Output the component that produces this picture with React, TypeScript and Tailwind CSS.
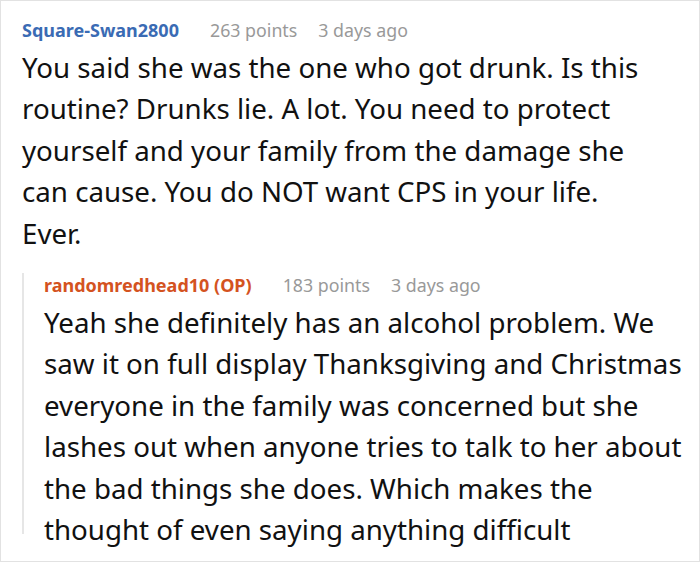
const comments = [
  {
    author: "Square-Swan2800",
    authorColor: "text-[#3a6bb4]",
    points: "263 points",
    time: "3 days ago",
    lines: [
      "You said she was the one who got drunk. Is this",
      "routine? Drunks lie. A lot. You need to protect",
      "yourself and your family from the damage she",
      "can cause. You do NOT want CPS in your life.",
      "Ever.",
    ],
  },
  {
    author: "randomredhead10 (OP)",
    authorColor: "text-[#d4531f]",
    points: "183 points",
    time: "3 days ago",
    lines: [
      "Yeah she definitely has an alcohol problem. We",
      "saw it on full display Thanksgiving and Christmas",
      "everyone in the family was concerned but she",
      "lashes out when anyone tries to talk to her about",
      "the bad things she does. Which makes the",
      "thought of even saying anything difficult",
    ],
  },
]

function Header({ c }: { c: (typeof comments)[number] }) {
  return (
    <div className="flex items-center gap-[31px] text-[18px] leading-[24px] whitespace-nowrap">
      <span className={`font-bold ${c.authorColor}`}>{c.author}</span>
      <div className="flex gap-[21px] text-[#999999] text-[17.8px]">
        <span>{c.points}</span>
        <span>{c.time}</span>
      </div>
    </div>
  )
}

export default function App() {
  const [first, reply] = comments

  return (
    <div className="w-[700px] h-[562px] overflow-hidden bg-white border border-[#e2e2e2] [font-family:'Noto_Sans',sans-serif] text-[#111111]">

      {/* TOP COMMENT */}

      <div className="pl-[21px] pt-[17px]">
        <Header c={first} />
        <div className="mt-[4.5px] text-[27.7px] leading-[41.5px] whitespace-nowrap">
          {first.lines.map((line, i) => (
            <div key={i}>{line}</div>
          ))}
        </div>
      </div>

      {/* REPLY */}

      <div className="ml-[21px] mt-[28px] border-l-2 border-[#e6e6e6] pl-[20px] h-[261px]">
        <div className="-mt-[9px]">
          <Header c={reply} />
        </div>
        <div className="mt-[4.5px] text-[27.7px] leading-[41.5px] whitespace-nowrap">
          {reply.lines.map((line, i) => (
            <div key={i}>{line}</div>
          ))}
        </div>
      </div>

    </div>
  )
}
